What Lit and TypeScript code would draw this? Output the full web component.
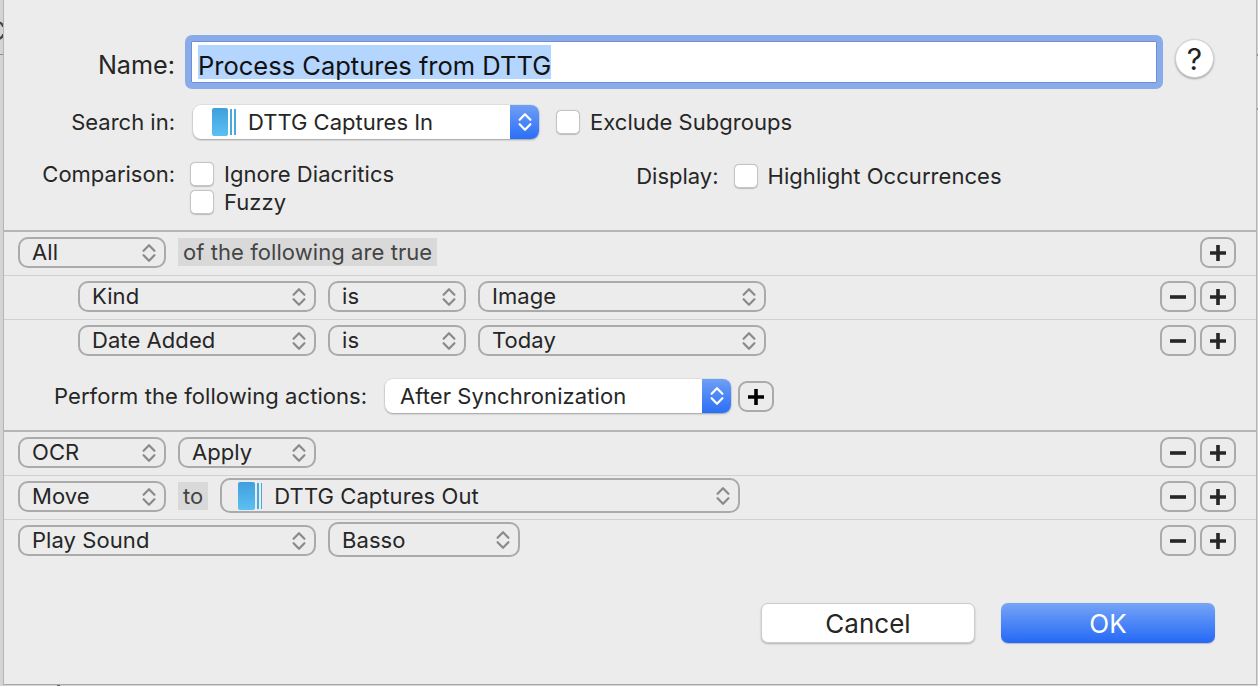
import { LitElement, html, css } from "lit";
import { customElement } from "lit/decorators.js";

const chev = (blue = false) => html`<svg class="chev ${blue ? "w" : ""}" width="14" height="20" viewBox="0 0 14 20" fill="none"><path d="M1.6 7.8 7 2.2 12.4 7.8M1.6 12.2 7 17.8 12.4 12.2" stroke-width="2.2" stroke-linecap="round" stroke-linejoin="round"/></svg>`;

const folder = () => html`<span class="folder"><span class="fbody"></span><span class="fs"></span><span class="fs"></span></span>`;

const pop = (label: string, width: number, cls = "", icon = false) =>
  html`<div class="pop ${cls}" style="width:${width}px">${icon ? folder() : ""}<span class="pt">${label}</span>${chev()}</div>`;

const bluePop = (label: string, width: number, icon = false, cls = "") =>
  html`<div class="bpop ${cls}" style="width:${width}px">${icon ? folder() : ""}<span class="pt">${label}</span><span class="seg">${chev(true)}</span></div>`;

const check = (label: string) => html`<label class="chk"><span class="box"></span><span>${label}</span></label>`;

const plus = (cls = "") => html`<div class="sq ${cls}"><svg width="18" height="18" viewBox="0 0 18 18"><path d="M1 9H17M9 1V17" stroke="currentColor" stroke-width="3.6" fill="none"/></svg></div>`;
const minus = () => html`<div class="sq"><svg width="18" height="18" viewBox="0 0 18 18"><path d="M1 9H17" stroke="currentColor" stroke-width="3.6" fill="none"/></svg></div>`;
const pm = () => html`<div class="pm">${minus()}${plus()}</div>`;

@customElement("app-root")
export class AppRoot extends LitElement {
  static styles = css`
    :host { display: block; position: relative; width: 1258px; height: 686px; overflow: hidden; background: #d4d4d4; font-family: Inter, "Liberation Sans", sans-serif; color: #262626; font-size: 22px; }
    * { box-sizing: border-box; }
    .under { position: absolute; inset: 0; }
    .under .c { position: absolute; left: -13px; top: 15px; font-size: 26px; color: #444; }
    .under .l1 { position: absolute; left: 0; top: 54px; width: 4px; height: 1px; background: #8f8f8f; }
    .under .r1 { position: absolute; right: 0; top: 54px; width: 2px; height: 2px; background: #8f8f8f; }
    .under .r2 { position: absolute; right: 0; top: 108px; width: 2px; height: 2px; background: #9a9a9a; }
    .under .b1 { position: absolute; left: 57px; bottom: 0; width: 3px; height: 2px; background: #666; }
    .dlg { position: absolute; left: 3px; top: 0; width: 1254px; height: 685px; background: #ececec; border-left: 1px solid #b4b4b4; border-right: 1px solid #b4b4b4; border-bottom: 1px solid #a8a8a8; padding-top: 35px; display: flex; flex-direction: column; }
    .namerow { display: flex; align-items: center; height: 54px; }
    .lab { width: 171px; text-align: right; flex: none; white-space: nowrap; }
    .namelab { font-size: 25.2px; padding-top: 5px; }
    .field { margin-left: 10px; width: 978px; height: 54px; background: #fff; border: 6px solid #8aabea; border-radius: 7px; box-shadow: inset 0 0 0 1px #6c8fd6; display: flex; align-items: center; padding-left: 7px; font-size: 25.5px; color: #111; }
    .sel { background: #b4d5fe; height: 34px; line-height: 41px; padding: 0; white-space: nowrap; }
    .help { margin: 4px 0 0 12px; align-self: flex-start; width: 39px; height: 39px; border-radius: 50%; background: #fff; border: 1px solid #d0d0d0; box-shadow: 0 1px 2px rgba(0,0,0,.35); display: flex; align-items: center; justify-content: center; font-size: 30px; font-weight: 400; color: #222; }
    .searchrow { display: flex; align-items: center; height: 34px; margin-top: 16px; }
    .searchrow .bpop { margin-left: 18px; }
    .searchrow .chk { margin-left: 17px; }
    .bpop { height: 34px; background: #fff; border-radius: 8px; box-shadow: 0 0 0 .5px rgba(0,0,0,.08), 0 1px 2px rgba(0,0,0,.3); display: flex; align-items: center; padding-left: 19px; white-space: nowrap; position: relative; overflow: hidden; }
    .bpop.after { padding-left: 15px; letter-spacing: .08px; }
    .bpop .pt { flex: 1; }
    .seg { width: 29px; align-self: stretch; background: linear-gradient(#6f9ff5, #2a6ff7); display: flex; align-items: center; justify-content: center; flex: none; }
    .chev { stroke: #8a8a8a; flex: none; }
    .chev.w { stroke: #fff; }
    .folder { display: inline-flex; align-items: stretch; height: 28px; width: 26px; margin-right: 10px; flex: none; }
    .fbody { width: 18px; border-radius: 2px; background: linear-gradient(#3f9fdc, #5cc0f3); margin-right: 2px; }
    .fs { width: 2px; background: #4aa8e0; margin: 1px 2px 1px 0; }
    .chk { display: flex; align-items: center; white-space: nowrap; height: 24px; letter-spacing: .05px; }
    .box { width: 24px; height: 24px; border-radius: 5px; background: #fff; border: 1px solid #c4c4c4; box-shadow: 0 .5px 1px rgba(0,0,0,.2); margin-right: 10px; flex: none; }
    .cmp { display: flex; margin-top: 23px; height: 52px; }
    .cmp .lab { margin-top: -1px; }
    .cmpcol { margin-left: 15px; display: flex; flex-direction: column; gap: 4px; }
    .disp { display: flex; align-items: center; height: 24px; margin-top: 2px; margin-left: 242px; }
    .disp .dl { margin-right: 15px; }
    .sep { height: 2px; background: #b6b6b6; flex: none; }
    .rows-top { margin-top: 16px; }
    .row { height: 44px; padding: 5px 20px 0 14px; display: flex; align-items: flex-start; gap: 12px; border-bottom: 1px solid #d0d0d0; white-space: nowrap; letter-spacing: .07px; }
    .row.last { border-bottom: none; }
    .row.ind { padding-left: 74px; }
    .pop { height: 31px; border: 2px solid #aaa; border-radius: 10px; display: flex; align-items: center; padding: 0 8px 0 12px; flex: none; }
    .pop .pt { flex: 1; margin-bottom: 2px; }
    .pop.tall { height: 35px; margin-top: -3px; }
    .pop.tall .pt { margin-bottom: 0; }
    .pop.tall .folder { margin-left: 4px; }
    .tag { height: 28px; margin-top: 1px; background: #d9d9d9; padding: 0 5px; line-height: 28px; color: #444; }
    .pm { margin-left: auto; display: flex; gap: 4px; }
    .sq { width: 36px; height: 31px; border: 2px solid #aaa; border-radius: 9px; display: flex; align-items: center; justify-content: center; color: #262626; flex: none; }
    .sq.blk { color: #000; }
    .perform { height: 66px; padding-top: 15px; display: flex; align-items: flex-start; }
    .perform .pl { margin-left: 50px; line-height: 34px; width: 331px; white-space: nowrap; letter-spacing: .07px; }
    .perform .sq { margin: 2px 0 0 7px; }
    .foot { margin-top: 39px; display: flex; justify-content: flex-end; gap: 26px; padding-right: 41px; }
    .btn { width: 214px; height: 40px; border-radius: 7px; display: flex; align-items: center; justify-content: center; font-size: 26px; }
    .cancel { background: #fff; border: 1px solid #cdcdcd; box-shadow: 0 1px 2px rgba(0,0,0,.25); }
    .ok { background: linear-gradient(#76a5f6, #2469f6); color: #fff; box-shadow: 0 .5px 1px rgba(0,0,0,.2); }
  `;

  render() {
    return html`
      <div class="under"><span class="c">C</span><span class="l1"></span><span class="r1"></span><span class="r2"></span><span class="b1"></span></div>
      <div class="dlg">
        <div class="namerow">
          <div class="lab namelab">Name:</div>
          <div class="field"><span class="sel">Process Captures from DTTG</span></div>
          <div class="help">?</div>
        </div>
        <div class="searchrow">
          <div class="lab">Search in:</div>
          ${bluePop("DTTG Captures In", 346, true)}
          ${check("Exclude Subgroups")}
        </div>
        <div class="cmp">
          <div class="lab">Comparison:</div>
          <div class="cmpcol">${check("Ignore Diacritics")}${check("Fuzzy")}</div>
          <div class="disp"><span class="dl">Display:</span>${check("Highlight Occurrences")}</div>
        </div>
        <div class="sep rows-top"></div>
        <div class="row">${pop("All", 148)}<div class="tag">of the following are true</div><div class="pm">${plus()}</div></div>
        <div class="row ind">${pop("Kind", 238)}${pop("is", 138)}${pop("Image", 288)}${pm()}</div>
        <div class="row ind last">${pop("Date Added", 238)}${pop("is", 138)}${pop("Today", 288)}${pm()}</div>
        <div class="perform"><div class="pl">Perform the following actions:</div>${bluePop("After Synchronization", 346, false, "after")}${plus("blk")}</div>
        <div class="sep"></div>
        <div class="row">${pop("OCR", 148)}${pop("Apply", 138)}${pm()}</div>
        <div class="row">${pop("Move", 148)}<div class="tag">to</div>${pop("DTTG Captures Out", 520, "tall", true)}${pm()}</div>
        <div class="row last">${pop("Play Sound", 298)}${pop("Basso", 192, "tall")}${pm()}</div>
        <div class="foot"><div class="btn cancel">Cancel</div><div class="btn ok">OK</div></div>
      </div>
    `;
  }
}
